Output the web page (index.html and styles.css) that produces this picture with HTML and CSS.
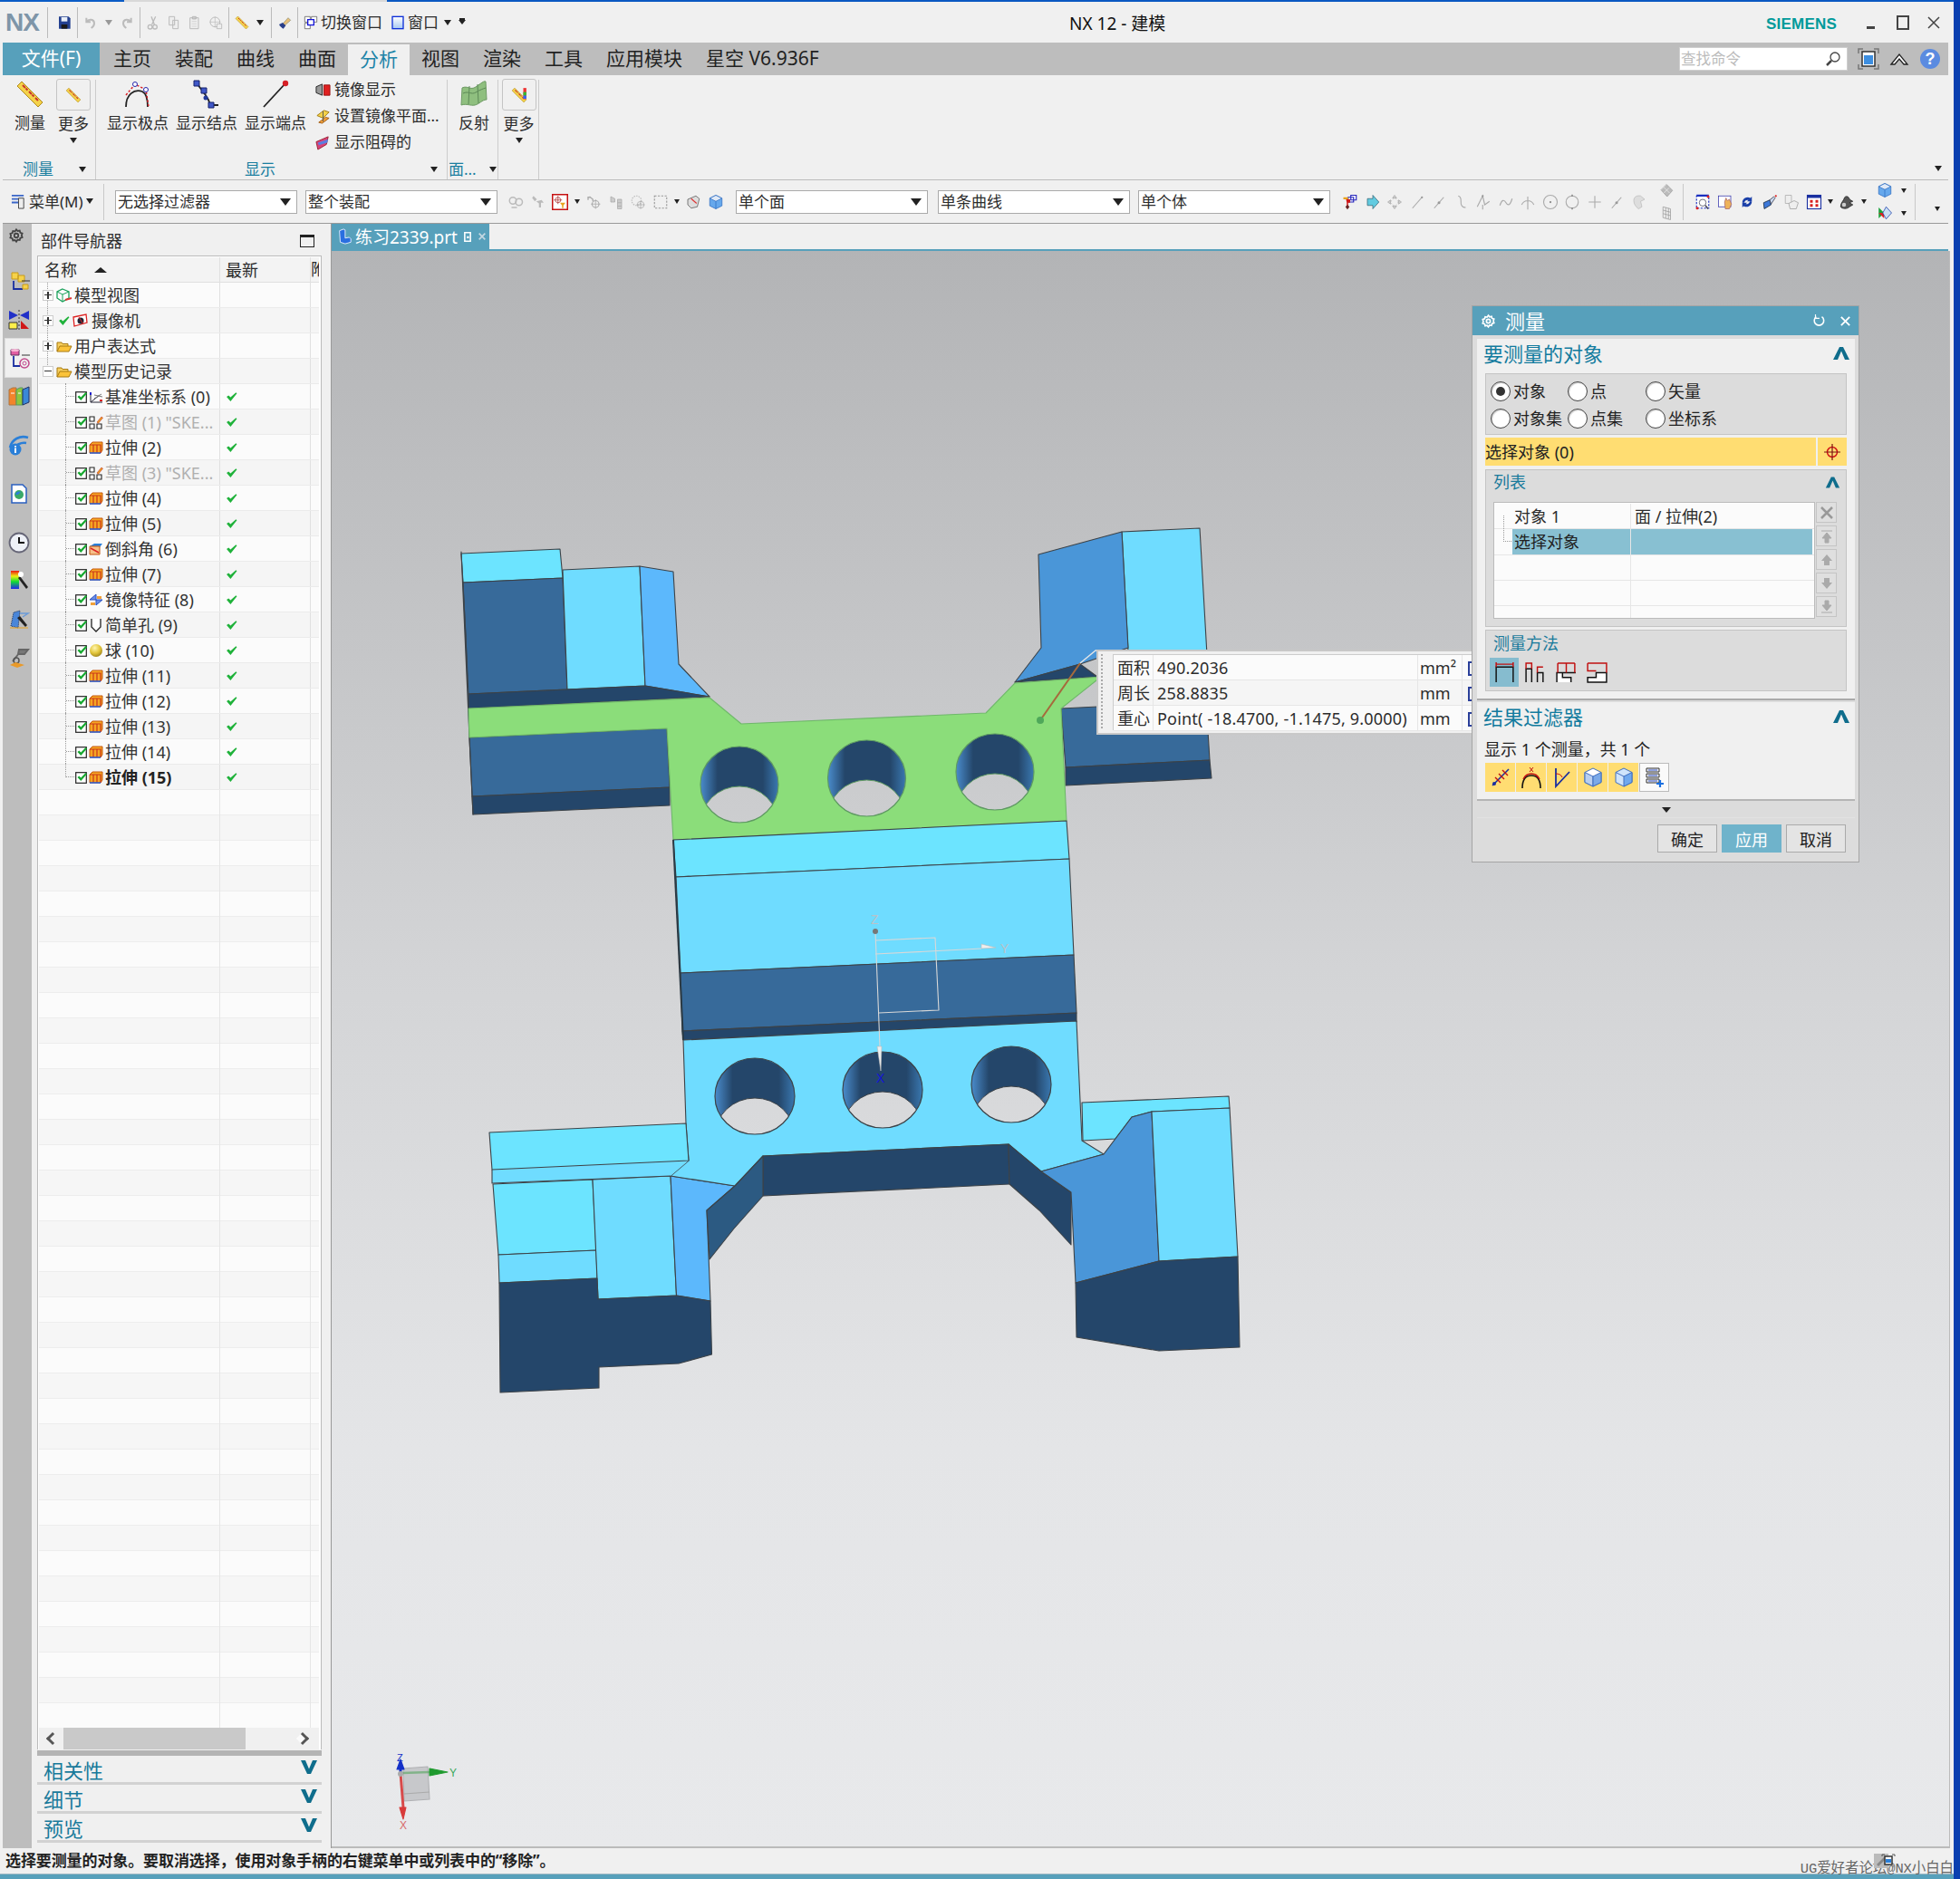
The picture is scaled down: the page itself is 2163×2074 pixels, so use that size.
FILE: index.html
```html
<!DOCTYPE html>
<html lang="zh-CN">
<head>
<meta charset="utf-8">
<title>NX 12 - 建模</title>
<link rel="stylesheet" href="styles.css">
</head>
<body>
<svg class="defs" width="0" height="0" aria-hidden="true">
  <defs>
    <symbol id="s-tick" viewBox="0 0 24 24"><path d="M2 13l4-3 4 4L21 4l2 2L10 22z" fill="#1fb23a"/></symbol>
    <symbol id="s-cb" viewBox="0 0 14 14"><rect x=".7" y="1.7" width="11.6" height="11.6" fill="#fff" stroke="#222" stroke-width="1.2"/><path d="M2.5 7l1.8-1.4 2 2L11.5 2l1.6 1.2L6.3 11z" fill="#16a82f"/></symbol>
    <symbol id="s-ext" viewBox="0 0 16 16"><path d="M1 5l3-3h11v9l-2 3H1z" fill="#f6a623" stroke="#c4560f"/><path d="M1 5h12v9M5 5v9M9 5v9" fill="none" stroke="#c9361a" stroke-width="1.2"/><path d="M1 14h12" stroke="#2a60d8" stroke-width="1.5"/></symbol>
    <symbol id="s-sk" viewBox="0 0 16 16"><path d="M1 2h5v5H1zM1 10h5v5H1zM9 10h5v5H9z" fill="#fff" stroke="#222" stroke-width="1.1"/><path d="M9 8l5-6 1.500 1.200-5 6z" fill="#f2a21d" stroke="#b33"  stroke-width=".6"/></symbol>
    <symbol id="s-folder" viewBox="0 0 18 16"><path d="M1 14V4h5l1 1.500h6V8" fill="#f7cf5e" stroke="#a87a10"/><path d="M1 14l3-6h13l-3 6z" fill="#fbc33a" stroke="#a87a10"/></symbol>
    <symbol id="s-ruler" viewBox="0 0 32 32"><path d="M7 2l23 23-5 5L2 7z" fill="#f4d24a" stroke="#b08a1b"/><path d="M8 6l3 3M11.500 9.500l2 2M15 13l3 3M18.500 16.500l2 2M22 20l3 3" stroke="#c8352a" stroke-width="2"/></symbol>
    <symbol id="s-cube" viewBox="0 0 24 24"><path d="M12 2l9 4.500v11L12 22l-9-4.500v-11z" fill="#66a8ec" stroke="#2f6ec0"/><path d="M3 6.500L12 11l9-4.500L12 2z" fill="#dfe9f7" stroke="#2f6ec0"/><path d="M12 11v11" stroke="#2f6ec0"/></symbol>
    <symbol id="s-g1" viewBox="0 0 24 24"><circle cx="8" cy="10" r="5" fill="none" stroke="#bbb" stroke-width="2"/><circle cx="17" cy="12" r="5" fill="none" stroke="#bbb" stroke-width="2"/><path d="M6 20h8" stroke="#bbb" stroke-width="2"/></symbol>
    <symbol id="s-g2" viewBox="0 0 24 24"><path d="M5 3l5 5-3 3-4-5zM9 11l8-2 3 4h-4v7h-3v-6z" fill="#bbb"/></symbol>
    <symbol id="s-g3" viewBox="0 0 24 24"><path d="M6 4l5 4v3M4 9V5h4" fill="none" stroke="#aaa" stroke-width="1.800"/><circle cx="15" cy="15" r="5" fill="none" stroke="#aaa" stroke-width="1.500"/><path d="M15 8v14M8 15h14" stroke="#aaa"/></symbol>
    <symbol id="s-g4" viewBox="0 0 24 24"><path d="M4 4l6 3v5H4zM14 8h6v14h-6zM14 13h6M14 18h6" fill="#ccc" stroke="#aaa"/></symbol>
    <symbol id="s-g5" viewBox="0 0 24 24"><circle cx="10" cy="10" r="7" fill="none" stroke="#bbb" stroke-width="1.500" stroke-dasharray="2 1.500"/><circle cx="16" cy="16" r="5" fill="none" stroke="#aaa"/><path d="M16 10v12M10 16h12" stroke="#aaa"/></symbol>
    <symbol id="s-line" viewBox="0 0 24 24"><path d="M5 21L19 5" stroke="#aaa" stroke-width="1.500"/><circle cx="19" cy="5" r="1.500" fill="#999"/></symbol>
    <symbol id="s-line2" viewBox="0 0 24 24"><path d="M5 21L19 5" stroke="#aaa" stroke-width="1.500"/><circle cx="12" cy="13" r="2" fill="#999"/></symbol>
    <symbol id="s-arc" viewBox="0 0 24 24"><path d="M7 3c7 2 2 9 5 14 1 2 4 3 6 3" fill="none" stroke="#aaa" stroke-width="1.500"/></symbol>
    <symbol id="s-sp" viewBox="0 0 24 24"><path d="M3 19L11 3l3 13 7-5M11 16v7" fill="none" stroke="#aaa" stroke-width="1.500"/><circle cx="11" cy="3" r="1.500" fill="#999"/></symbol>
    <symbol id="s-wave" viewBox="0 0 24 24"><path d="M3 17c3-9 6-9 9-4s6 4 9-6" fill="none" stroke="#aaa" stroke-width="1.600"/></symbol>
    <symbol id="s-mid" viewBox="0 0 24 24"><path d="M3 16c4-8 14-8 18 0M12 4v19" fill="none" stroke="#aaa" stroke-width="1.500"/></symbol>
    <symbol id="s-cir" viewBox="0 0 24 24"><circle cx="12" cy="12" r="10" fill="none" stroke="#aaa" stroke-width="1.500"/><circle cx="12" cy="12" r="1.500" fill="#888"/></symbol>
    <symbol id="s-cir2" viewBox="0 0 24 24"><circle cx="12" cy="12" r="9" fill="none" stroke="#aaa" stroke-width="1.500"/><path d="M12 1v3M12 20v3" stroke="#888" stroke-width="2"/></symbol>
    <symbol id="s-plus" viewBox="0 0 24 24"><path d="M12 3v18M3 12h18" stroke="#aaa" stroke-width="1.500"/></symbol>
    <symbol id="s-blob" viewBox="0 0 24 24"><path d="M4 10c0-6 5-8 10-7l6 5-6 3 2 8-5 3c-4-3-7-7-7-12z" fill="#ddd" stroke="#bbb"/></symbol>
    <symbol id="s-gridw" viewBox="0 0 24 24"><path d="M4 10l8-8 9 9-8 9z" fill="#bbb" stroke="#999"/><path d="M8 6l9 9M12 2l-8 8M16 7l-8 8" stroke="#eee"/></symbol>
    <symbol id="s-grid" viewBox="0 0 24 24"><path d="M7 3l11 3v16L7 19z" fill="#eee" stroke="#999"/><path d="M7 8l11 3M7 13l11 3M11 4v16M15 5v16" stroke="#999"/></symbol>
    <symbol id="s-wheel" viewBox="0 0 24 24"><path d="M12 3l2 2.300 3-.600.800 3 3 1-1 3 1 3-3 1-.800 3-3-.600L12 21l-2-2.300-3 .600-.800-3-3-1 1-3-1-3 3-1 .800-3 3 .600z" fill="none" stroke="currentColor" stroke-width="2.400"/><circle cx="12" cy="12" r="3" fill="none" stroke="currentColor" stroke-width="2.400"/></symbol>
    <symbol id="s-up" viewBox="0 0 20 20"><path d="M1 17h5l4-9.500 4 9.500h5L12 3H8z" fill="#0f6d8c"/></symbol>
    <symbol id="s-down" viewBox="0 0 20 20"><path d="M1 3h5l4 9.500L14 3h5l-7 15H8z" fill="#0f6d8c"/></symbol>
  </defs>
</svg>

<div class="window">
  <div class="edge"><span class="edge-a"></span><span class="edge-b"></span><span class="edge-c"></span></div>
  <div class="inner">
    <header class="titlebar">
      <div class="qa">
        <span class="nx">NX</span>
        <i class="qsep"></i>
        <svg class="qi save" viewBox="0 0 24 24"><path d="M3 2h16l3 3v17H3z" fill="#23408f"/><path d="M7 3h10v7H7z" fill="#e8eef8"/><path d="M7 15h10v7H7z" fill="#1a1a1a"/></svg>
        <i class="qsep"></i>
        <svg class="qi" viewBox="0 0 24 24"><path d="M5 4v7h7M5 11c4-6 13-5 13 2 0 3-2 6-5 8" fill="none" stroke="#bbb" stroke-width="3"/></svg><i class="caret lt"></i>
        <svg class="qi" viewBox="0 0 24 24"><path d="M19 4v7h-7M19 11c-4-6-13-5-13 2 0 3 2 6 5 8" fill="none" stroke="#bbb" stroke-width="3"/></svg>
        <i class="qsep"></i>
        <svg class="qi" viewBox="0 0 24 24"><path d="M16 2l-6 13M9 2l5 13" stroke="#bbb" stroke-width="2"/><circle cx="7" cy="19" r="3.500" fill="none" stroke="#bbb" stroke-width="2"/><circle cx="15" cy="19" r="3.500" fill="none" stroke="#bbb" stroke-width="2"/></svg>
        <svg class="qi" viewBox="0 0 24 24"><path d="M4 2h9v14H4zM10 8h9v14h-9z" fill="#eee" stroke="#bbb" stroke-width="1.500"/></svg>
        <svg class="qi" viewBox="0 0 24 24"><path d="M4 4h14v18H4z" fill="#eee" stroke="#bbb" stroke-width="1.500"/><path d="M8 2h6v4H8z" fill="#ccc" stroke="#aaa"/><path d="M7 10h8M7 14h8M7 18h8" stroke="#ccc"/></svg>
        <svg class="qi" viewBox="0 0 24 24"><circle cx="11" cy="11" r="8" fill="none" stroke="#bbb" stroke-width="1.500"/><path d="M11 2v18M2 11h18" stroke="#bbb"/><path d="M14 14h8v8h-8z" fill="#eee" stroke="#aaa"/></svg>
        <i class="qsep"></i>
        <svg class="qi" viewBox="0 0 32 32"><use href="#s-ruler"/></svg><i class="caret"></i>
        <i class="qsep"></i>
        <svg class="qi" viewBox="0 0 24 24"><path d="M9 14l9-10 4 4-10 9z" fill="#e9c07a" stroke="#886"/><path d="M3 15l6-3 5 5-4 5c-2-1-6-4-7-7z" fill="#2a3f8a"/></svg>
        <i class="qsep"></i>
        <svg class="qi" viewBox="0 0 24 24"><path d="M2 2h9v9H2zM13 2h9v9h-9zM2 13h9v9H2z" fill="#fff" stroke="#444"/><path d="M7 7h10v9H7z" fill="#fff" stroke="#1515d8" stroke-width="2"/></svg>
        <span class="qtext">切换窗口</span>
        <svg class="qi win" viewBox="0 0 24 24"><defs><linearGradient id="wg" x1="0" y1="0" x2="0" y2="1"><stop offset="0" stop-color="#fff"/><stop offset="1" stop-color="#a7c8f2"/></linearGradient></defs><rect x="3" y="2" width="18" height="20" fill="url(#wg)" stroke="#0d2fd8" stroke-width="2"/></svg>
        <span class="qtext">窗口</span><i class="caret c-win"></i>
        <i class="caret over"></i>
      </div>
      <div class="apptitle">NX 12 - 建模</div>
      <div class="winctl">
        <span class="siemens">SIEMENS</span>
        <i class="min"></i><i class="max"></i>
        <svg class="cls" viewBox="0 0 14 14"><path d="M1 1l12 12M13 1L1 13" stroke="#444" stroke-width="1.500"/></svg>
      </div>
    </header>

    <nav class="menubar">
      <span class="filetab">文件(F)</span>
      <span class="mi">主页</span><span class="mi">装配</span><span class="mi">曲线</span><span class="mi">曲面</span>
      <span class="mi on">分析</span>
      <span class="mi">视图</span><span class="mi">渲染</span><span class="mi">工具</span><span class="mi">应用模块</span>
      <span class="mi">星空 V6.936F</span>
      <div class="menu-right">
        <div class="search"><span>查找命令</span><svg viewBox="0 0 18 18"><circle cx="11" cy="7" r="5" fill="none" stroke="#444" stroke-width="1.300"/><path d="M7 11l-5 5" stroke="#444" stroke-width="2.500"/></svg></div>
        <svg class="mr-ic" viewBox="0 0 24 24"><path d="M1 6V1h5M18 1h5v5M23 18v5h-5M6 23H1v-5" fill="none" stroke="#777" stroke-width="1.500"/><rect x="5" y="4" width="14" height="16" fill="#fff" stroke="#333" stroke-width="1.500"/><rect x="7" y="8" width="10" height="10" fill="#3d8ee0"/></svg>
        <svg class="mr-ic" viewBox="0 0 24 24"><path d="M3 18L12 7l9 11-4 0-5-6-5 6z" fill="#fff" stroke="#222" stroke-width="1.300"/></svg>
        <svg class="mr-ic" viewBox="0 0 24 24"><circle cx="12" cy="12" r="11" fill="#5b8be0"/><text x="12" y="18" class="help">?</text></svg>
      </div>
    </nav>

    <section class="ribbon">
      <div class="rg g1">
        <div class="rg-body">
          <div class="rb w-a"><svg class="big" viewBox="0 0 32 32"><use href="#s-ruler"/></svg><span>测量</span></div>
          <div class="rb w-b"><span class="ibox"><svg viewBox="0 0 32 32"><use href="#s-ruler"/></svg></span><span>更多</span><i class="caret"></i></div>
        </div>
        <div class="rg-foot"><span class="lbl">测量</span><i class="caret"></i></div>
      </div>
      <div class="rg g2">
        <div class="rg-body">
          <div class="rb w-c"><svg class="big" viewBox="0 0 32 32"><path d="M3 30C3 16 12 10 21 13c4 2 6 9 6 17" fill="none" stroke="#222" stroke-width="1.800"/><path d="M3 17L13 5l12 6 3 19" fill="none" stroke="#d61f26" stroke-width="1.500" stroke-dasharray="2.500 2"/><circle cx="13" cy="5" r="2.500" fill="#fff" stroke="#22a"/><circle cx="25" cy="11" r="2.500" fill="#fff" stroke="#22a"/></svg><span>显示极点</span></div>
          <div class="rb w-c"><svg class="big" viewBox="0 0 32 32"><path d="M5 2c3 8 4 6 7 11s6 6 8 15h9" fill="none" stroke="#222" stroke-width="1.800"/><path d="M2 1h6v6H2zM10 9h6v6h-6zM18 25h6v6h-6z" fill="#4058c8" stroke="#14206a"/><circle cx="15" cy="20" r="2.500" fill="#223a9a"/></svg><span>显示结点</span></div>
          <div class="rb w-c"><svg class="big" viewBox="0 0 32 32"><path d="M3 30L27 4" stroke="#222" stroke-width="1.800"/><circle cx="27" cy="4" r="3.200" fill="#d61f26"/></svg><span>显示端点</span></div>
          <div class="rlist">
            <div><svg viewBox="0 0 18 18"><path d="M1 5l7-3v13l-7-3z" fill="#999" stroke="#222"/><path d="M10 3h7v12h-7z" fill="#e02020" stroke="#911"/></svg><span>镜像显示</span></div>
            <div><svg viewBox="0 0 18 18"><path d="M2 8l8-6 6 2-7 7z" fill="#f4d24a" stroke="#a27a10"/><path d="M4 16l8-6 4 1-8 6z" fill="#f2a13a" stroke="#a25a10"/><path d="M9 3v12" stroke="#555"/></svg><span>设置镜像平面...</span></div>
            <div><svg viewBox="0 0 18 18"><path d="M1 8l14-6-2 9-10 6z" fill="#d9437a" stroke="#923"/><path d="M3 9l12-4-1 4-10 3z" fill="#5a7ee0"/></svg><span>显示阻碍的</span></div>
          </div>
        </div>
        <div class="rg-foot center"><span class="lbl">显示</span><i class="caret abs-r"></i></div>
      </div>
      <div class="rg g3">
        <div class="rg-body">
          <div class="rb w-d"><svg class="big" viewBox="0 0 32 32"><path d="M3 9c6-3 9 3 15-1s9-7 11-6l1 20c-5 0-8 5-13 6S8 26 2 28z" fill="#8fbf7f" stroke="#6d9a63"/><path d="M11 7l-1 20M20 5l1 21M4 15c6-3 9 2 14-1s8-4 11-5" stroke="#5d8a57" fill="none"/></svg><span>反射</span></div>
        </div>
        <div class="rg-foot"><span class="lbl">面...</span><i class="caret"></i></div>
      </div>
      <div class="rg g4">
        <div class="rg-body">
          <div class="rb w-e"><span class="ibox"><svg viewBox="0 0 32 32"><use href="#s-ruler"/><path d="M24 2h6v22h-6z" fill="#e33"/><path d="M24 10h6v7h-6z" fill="#3b3"/><path d="M24 17h6v6h-6z" fill="#36f"/></svg></span><span>更多</span><i class="caret"></i></div>
        </div>
      </div>
      <div class="rg-end"><i class="caret"></i></div>
    </section>

    <section class="selbar">
      <div class="menu-btn"><svg viewBox="0 0 18 18"><path d="M1 2h14M1 6h14M1 10h14" stroke="#3a66c8" stroke-width="2"/><path d="M9 5h6v12H9z" fill="#eee" stroke="#444"/></svg><span>菜单(M)</span><i class="caret"></i></div>
      <i class="vsep"></i>
      <div class="combo c201"><span>无选择过滤器</span><i class="caret big-c"></i></div>
      <div class="combo c212"><span>整个装配</span><i class="caret big-c"></i></div>
      <div class="tools t-a">
        <svg><use href="#s-g1"/></svg><svg><use href="#s-g2"/></svg>
        <svg class="redbox" viewBox="0 0 24 24"><rect x="1" y="1" width="22" height="22" fill="#fff" stroke="#c51111" stroke-width="2"/><circle cx="9" cy="9" r="4" fill="none" stroke="#a33"/><path d="M9 3v12M3 9h12" stroke="#a33"/><path d="M12 13h8l-3 4v4h-2v-4z" fill="#e9a21d"/></svg><i class="caret"></i>
        <svg><use href="#s-g3"/></svg><svg><use href="#s-g4"/></svg><svg><use href="#s-g5"/></svg>
        <svg viewBox="0 0 24 24"><rect x="3" y="3" width="18" height="18" fill="none" stroke="#999" stroke-dasharray="3 2" stroke-width="1.500"/></svg><i class="caret"></i>
        <svg viewBox="0 0 24 24"><path d="M4 8l12-5 5 4-3 12-9 2-5-5z" fill="#ddd" stroke="#555"/><path d="M9 7l8 7" stroke="#d33" stroke-width="1.500"/></svg>
        <svg><use href="#s-cube"/></svg>
      </div>
      <div class="combo c212 first"><span>单个面</span><i class="caret big-c"></i></div>
      <div class="combo c212 g11"><span>单条曲线</span><i class="caret big-c"></i></div>
      <div class="combo c212 g9"><span>单个体</span><i class="caret big-c"></i></div>
      <div class="tools t-b">
        <svg viewBox="0 0 24 24"><path d="M9 5h8v7H9zM13 2h8v7h-8z" fill="#fff" stroke="#22b" stroke-width="1.500"/><path d="M2 5h7v3H2z" fill="#e9a21d"/><path d="M6 8h6v5H9v8H7v-8z" fill="#d01818"/><path d="M8 16l3 3-3 4-3-4z" fill="#622"/></svg>
        <svg viewBox="0 0 24 24"><path d="M4 7h8V2l9 10-9 10v-5H4z" fill="#62cbe0" stroke="#367"/></svg>
        <svg viewBox="0 0 24 24"><path d="M12 2l3 4H9zM12 22l3-4H9zM2 12l4-3v6zM22 12l-4-3v6z" fill="#ccc" stroke="#aaa"/><circle cx="12" cy="12" r="5" fill="none" stroke="#bbb" stroke-dasharray="2 2"/></svg>
        <svg><use href="#s-line"/></svg><svg><use href="#s-line2"/></svg><svg><use href="#s-arc"/></svg><svg><use href="#s-sp"/></svg><svg><use href="#s-wave"/></svg><svg><use href="#s-mid"/></svg><svg><use href="#s-cir"/></svg><svg><use href="#s-cir2"/></svg><svg><use href="#s-plus"/></svg><svg><use href="#s-line2"/></svg><svg><use href="#s-blob"/></svg>
        <span class="stack"><svg><use href="#s-gridw"/></svg><svg><use href="#s-grid"/></svg></span>
        <i class="vsep tall"></i>
        <svg viewBox="0 0 24 24"><rect x="3" y="3" width="18" height="18" fill="#fff" stroke="#1a2fc0" stroke-width="1.500" stroke-dasharray="3 2"/><circle cx="12" cy="13" r="5" fill="none" stroke="#445"/><path d="M16 17l4 5" stroke="#445" stroke-width="2"/><path d="M3 1h18v3H3z" fill="#1a2fc0"/><circle cx="4" cy="21" r="2" fill="#d22"/><circle cx="20" cy="4" r="2" fill="#d22"/></svg>
        <svg viewBox="0 0 24 24"><rect x="2" y="3" width="18" height="16" fill="#fff" stroke="#33a"/><path d="M11 12l2-6 2 4 3-2 3 7-3 7h-6z" fill="#eeb35a" stroke="#a66"/></svg>
        <svg viewBox="0 0 24 24"><path d="M5 13a8 8 0 0 1 12-7l2-2v7h-7l2-2a5 5 0 0 0-6 4z" fill="#1a3fa8"/><path d="M19 11a8 8 0 0 1-12 7l-2 2v-7h7l-2 2a5 5 0 0 0 6-4z" fill="#1a3fa8"/></svg>
        <svg viewBox="0 0 24 24"><path d="M3 13l9-4 2 7-10 6z" fill="#3d78d8" stroke="#123"/><path d="M12 9l6-5 2 2-6 9z" fill="#c8d8f0" stroke="#334"/><circle cx="21" cy="3" r="1.500" fill="#d22"/></svg>
        <svg viewBox="0 0 24 24"><path d="M3 2h9v12H3z" fill="#eee" stroke="#aaa"/><path d="M8 14l8-4 6 3-3 9H10z" fill="#eee" stroke="#999"/></svg>
        <svg viewBox="0 0 24 24"><rect x="2" y="2" width="20" height="20" fill="#fff" stroke="#1a2fa0" stroke-width="1.500"/><path d="M2 2h20v4H2z" fill="#1a2fa0"/><path d="M6 9h4v4H6zM14 9h4v4h-4zM6 15h4v4H6zM14 15h4v4h-4z" fill="#d82020"/></svg><i class="caret"></i>
        <svg viewBox="0 0 24 24"><path d="M3 19c0-6 4-8 6-14 3-3 7 0 7 3l5 3-5 2 5 3-5 3c-4 4-11 3-13 0z" fill="#555" stroke="#222"/><circle cx="8" cy="16" r="3" fill="#ccc"/></svg><i class="caret"></i>
        <span class="stack sb"><span class="stk"><svg><use href="#s-cube"/></svg><i class="caret"></i></span><span class="stk"><svg viewBox="0 0 24 24"><path d="M3 4l8 8-8 8z" fill="#18a13a"/><path d="M3 12h8v8z" fill="#d22"/><path d="M14 3l8 9-8 9-5-9z" fill="#c9def5" stroke="#1a3fa8"/></svg><i class="caret"></i></span></span>
        <i class="vsep tall"></i>
        <i class="caret end"></i>
      </div>
    </section>

    <div class="main">
      <aside class="strip">
        <svg class="st-gear"><use href="#s-wheel"/></svg>
        <div class="st st1"><svg viewBox="0 0 24 24"><path d="M4 3h7v7H4zM11 6h7v7h-7z" fill="#f6d24a" stroke="#c79a1a"/><path d="M6 12v9h10" fill="none" stroke="#1a2fa0" stroke-width="1.800"/><path d="M16 16h6v5h-6z" fill="#f6d24a" stroke="#c79a1a"/><path d="M15 12h9" stroke="#333"/></svg></div>
        <div class="st m1"><svg viewBox="0 0 24 24"><path d="M1 2l10 5-10 5zM23 2l-10 5 10 5z" fill="#2030c8"/><path d="M1 15h9v7H1z" fill="#fff04a" stroke="#333"/><path d="M14 13l9 9h-9z" fill="#d01818"/><path d="M12 1v23" stroke="#333" stroke-dasharray="2 2"/></svg></div>
        <div class="st active"><svg viewBox="0 0 24 24"><path d="M2 3h9v6H2z" fill="#e35ea2" stroke="#5a2a5a"/><ellipse cx="6.500" cy="3.500" rx="4.500" ry="1.500" fill="#f6b5d4"/><path d="M5 10v11h7" fill="none" stroke="#1a2fa0" stroke-width="1.800"/><circle cx="17" cy="18" r="5" fill="none" stroke="#c24a8c" stroke-width="1.500"/><circle cx="17" cy="18" r="2" fill="none" stroke="#c24a8c"/><path d="M14 9h9" stroke="#333"/></svg></div>
        <div class="st"><svg viewBox="0 0 24 24"><path d="M1 5l4-2h4v19H1z" fill="#f3842b" stroke="#a74"/><path d="M9 5l4-2h3v19H9z" fill="#8fc63d" stroke="#596"/><path d="M16 5l7-3v17l-7 3z" fill="#3a88d8" stroke="#236"/><path d="M3 9h4M11 9h3" stroke="#fff"/></svg></div>
        <div class="st m11"><svg viewBox="0 0 24 24"><path d="M2 15C4 6 13 1 22 4M7 17c1-5 7-8 13-7" fill="none" stroke="#2a7fd8" stroke-width="2.600"/><circle cx="8" cy="17" r="6.500" fill="#2a7fd8"/><path d="M7 13h2v1.500H7zM7 15.500h2V21H7z" fill="#fff"/></svg></div>
        <div class="st m12"><svg viewBox="0 0 24 24"><path d="M4 2h12l4 4v16H4z" fill="#fff" stroke="#2a5fc0" stroke-width="1.500"/><circle cx="12" cy="13" r="5" fill="#3aa968"/><path d="M8 13a4 4 0 0 1 6-3l-3 3z" fill="#2a7fd8"/></svg></div>
        <div class="st m12"><svg viewBox="0 0 24 24"><circle cx="12" cy="12" r="10.500" fill="#eef1f7" stroke="#667" stroke-width="1.800"/><path d="M12 6v6h6" fill="none" stroke="#111" stroke-width="2"/></svg></div>
        <div class="st m-1"><svg viewBox="0 0 24 24"><defs><linearGradient id="rb" x1="0" y1="0" x2="0" y2="1"><stop offset="0" stop-color="#e11"/><stop offset=".3" stop-color="#ee1"/><stop offset=".6" stop-color="#1d3"/><stop offset="1" stop-color="#22e"/></linearGradient></defs><rect x="3" y="2" width="9" height="20" fill="url(#rb)"/><path d="M13 8l9 12-2 2-9-12z" fill="#222"/><circle cx="14" cy="6" r="3" fill="#fff"/></svg></div>
        <div class="st m1"><svg viewBox="0 0 24 24"><path d="M3 20l3-15 7-2-2 19z" fill="#4a86d8" stroke="#235" stroke-dasharray="1 1"/><path d="M13 6h9l-6 4" fill="none" stroke="#6a9ad8" stroke-width="1.500"/><path d="M13 9l8 10-2 2-9-10z" fill="#222"/><path d="M2 22l20 0" stroke="#e9a21d"/></svg></div>
        <div class="st m1"><svg viewBox="0 0 24 24"><path d="M12 3h10l-4 5H11zM12 7l-7 9" stroke="#666" fill="#777" stroke-width="2"/><circle cx="9" cy="15" r="3" fill="none" stroke="#555" stroke-width="1.500"/><path d="M2 20l6-3 10 3-8 3z" fill="#e99a2a"/></svg></div>
      </aside>

      <aside class="nav">
        <div class="nav-head"><span>部件导航器</span><i class="nav-max"></i></div>
        <div class="tbl">
          <div class="thead"><span class="c-a"><span>名称</span><i class="sort"></i></span><span class="c-b"><span>最新</span></span><span class="c-c">附</span></div>
          <div class="tree">
            <div class="r top"><span class="c-a"><i class="exp plus"></i><svg class="ti" viewBox="0 0 18 16"><path d="M7 1l7 3v7l-7 4-6-4V4z" fill="none" stroke="#1ba15b" stroke-width="1.300"/><path d="M1 4l6 3 7-3M7 7v8" fill="none" stroke="#1ba15b"/><path d="M10 13l7-2" stroke="#d33" stroke-width="2"/></svg><span>模型视图</span></span><span class="c-b"></span><span class="c-c"></span></div>
            <div class="r top"><span class="c-a"><i class="exp plus"></i><svg class="ti tk"><use href="#s-tick"/></svg><svg class="ti" viewBox="0 0 18 16"><path d="M1 4l14-3 1 9-14 4z" fill="#fff" stroke="#d22" stroke-width="1.300"/><circle cx="9" cy="8" r="3.500" fill="#223"/><path d="M7 4l5 8" stroke="#d22"/></svg><span class="sp">摄像机</span></span><span class="c-b"></span><span class="c-c"></span></div>
            <div class="r top"><span class="c-a"><i class="exp plus"></i><svg class="ti"><use href="#s-folder"/></svg><span>用户表达式</span></span><span class="c-b"></span><span class="c-c"></span></div>
            <div class="r top last"><span class="c-a"><i class="exp minus"></i><svg class="ti"><use href="#s-folder"/></svg><span>模型历史记录</span></span><span class="c-b"></span><span class="c-c"></span></div>
            <div class="r ft"><span class="c-a"><svg class="cb"><use href="#s-cb"/></svg><svg class="fi" viewBox="0 0 16 16"><path d="M2 3v11M2 14h13M2 14l10-8" stroke="#223" fill="none"/><path d="M2 3v3" stroke="#22c" stroke-width="2"/><path d="M12 12h3" stroke="#d22" stroke-width="2"/><path d="M6 6l9 2M6 10l8-5" stroke="#777"/></svg><span>基准坐标系 (0)</span></span><span class="c-b"><svg class="ok"><use href="#s-tick"/></svg></span><span class="c-c"></span></div>
            <div class="r ft dim"><span class="c-a"><svg class="cb"><use href="#s-cb"/></svg><svg class="fi"><use href="#s-sk"/></svg><span>草图 (1) "SKE...</span></span><span class="c-b"><svg class="ok"><use href="#s-tick"/></svg></span><span class="c-c"></span></div>
            <div class="r ft"><span class="c-a"><svg class="cb"><use href="#s-cb"/></svg><svg class="fi"><use href="#s-ext"/></svg><span>拉伸 (2)</span></span><span class="c-b"><svg class="ok"><use href="#s-tick"/></svg></span><span class="c-c"></span></div>
            <div class="r ft dim"><span class="c-a"><svg class="cb"><use href="#s-cb"/></svg><svg class="fi"><use href="#s-sk"/></svg><span>草图 (3) "SKE...</span></span><span class="c-b"><svg class="ok"><use href="#s-tick"/></svg></span><span class="c-c"></span></div>
            <div class="r ft"><span class="c-a"><svg class="cb"><use href="#s-cb"/></svg><svg class="fi"><use href="#s-ext"/></svg><span>拉伸 (4)</span></span><span class="c-b"><svg class="ok"><use href="#s-tick"/></svg></span><span class="c-c"></span></div>
            <div class="r ft"><span class="c-a"><svg class="cb"><use href="#s-cb"/></svg><svg class="fi"><use href="#s-ext"/></svg><span>拉伸 (5)</span></span><span class="c-b"><svg class="ok"><use href="#s-tick"/></svg></span><span class="c-c"></span></div>
            <div class="r ft"><span class="c-a"><svg class="cb"><use href="#s-cb"/></svg><svg class="fi" viewBox="0 0 16 16"><path d="M1 5l5-3h9l-3 4z" fill="#2a7fd8"/><path d="M1 5h11v9H1z" fill="#f6c08a" stroke="#c4560f"/><path d="M2 7l9 5" stroke="#d22" stroke-width="1.500"/></svg><span>倒斜角 (6)</span></span><span class="c-b"><svg class="ok"><use href="#s-tick"/></svg></span><span class="c-c"></span></div>
            <div class="r ft"><span class="c-a"><svg class="cb"><use href="#s-cb"/></svg><svg class="fi"><use href="#s-ext"/></svg><span>拉伸 (7)</span></span><span class="c-b"><svg class="ok"><use href="#s-tick"/></svg></span><span class="c-c"></span></div>
            <div class="r ft"><span class="c-a"><svg class="cb"><use href="#s-cb"/></svg><svg class="fi" viewBox="0 0 16 16"><path d="M1 8l7-6v6zM15 8l-7 6V8z" fill="#6a8ee8" stroke="#2a50c0"/><path d="M2 11h5v3H2zM9 4h5v3H9z" fill="#f2a13a"/></svg><span>镜像特征 (8)</span></span><span class="c-b"><svg class="ok"><use href="#s-tick"/></svg></span><span class="c-c"></span></div>
            <div class="r ft"><span class="c-a"><svg class="cb"><use href="#s-cb"/></svg><svg class="fi" viewBox="0 0 16 16"><path d="M3 1v9l5 5 5-5V1" fill="#fff" stroke="#222" stroke-width="1.300"/></svg><span>简单孔 (9)</span></span><span class="c-b"><svg class="ok"><use href="#s-tick"/></svg></span><span class="c-c"></span></div>
            <div class="r ft"><span class="c-a"><svg class="cb"><use href="#s-cb"/></svg><svg class="fi" viewBox="0 0 16 16"><defs><radialGradient id="ball" cx=".4" cy=".3" r=".7"><stop offset="0" stop-color="#fff6b0"/><stop offset=".6" stop-color="#e2c53a"/><stop offset="1" stop-color="#a58a20"/></radialGradient></defs><circle cx="8" cy="8" r="7" fill="url(#ball)"/></svg><span>球 (10)</span></span><span class="c-b"><svg class="ok"><use href="#s-tick"/></svg></span><span class="c-c"></span></div>
            <div class="r ft"><span class="c-a"><svg class="cb"><use href="#s-cb"/></svg><svg class="fi"><use href="#s-ext"/></svg><span>拉伸 (11)</span></span><span class="c-b"><svg class="ok"><use href="#s-tick"/></svg></span><span class="c-c"></span></div>
            <div class="r ft"><span class="c-a"><svg class="cb"><use href="#s-cb"/></svg><svg class="fi"><use href="#s-ext"/></svg><span>拉伸 (12)</span></span><span class="c-b"><svg class="ok"><use href="#s-tick"/></svg></span><span class="c-c"></span></div>
            <div class="r ft"><span class="c-a"><svg class="cb"><use href="#s-cb"/></svg><svg class="fi"><use href="#s-ext"/></svg><span>拉伸 (13)</span></span><span class="c-b"><svg class="ok"><use href="#s-tick"/></svg></span><span class="c-c"></span></div>
            <div class="r ft"><span class="c-a"><svg class="cb"><use href="#s-cb"/></svg><svg class="fi"><use href="#s-ext"/></svg><span>拉伸 (14)</span></span><span class="c-b"><svg class="ok"><use href="#s-tick"/></svg></span><span class="c-c"></span></div>
            <div class="r ft cur"><span class="c-a"><svg class="cb"><use href="#s-cb"/></svg><svg class="fi"><use href="#s-ext"/></svg><span>拉伸 (15)</span></span><span class="c-b"><svg class="ok"><use href="#s-tick"/></svg></span><span class="c-c"></span></div>
            <div class="empty"></div>
          </div>
          <div class="hscroll"><i class="chev l"></i><i class="thumb"></i><i class="chev r"></i></div>
        </div>
        <div class="nav-div"></div>
        <div class="acc"><span>相关性</span><svg><use href="#s-down"/></svg></div>
        <div class="acc"><span>细节</span><svg><use href="#s-down"/></svg></div>
        <div class="acc"><span>预览</span><svg><use href="#s-down"/></svg></div>
      </aside>

      <div class="work">
        <div class="tabstrip">
          <div class="doctab"><svg viewBox="0 0 20 20"><path d="M4 3l5-2 2 1v10l5-1 2 2v4l-7 2-6-2z" fill="#2a6fe0" stroke="#eaf2ff"/></svg><span>练习2339.prt</span><svg class="doc" viewBox="0 0 12 14"><path d="M2 1h8v12H2z" fill="none" stroke="#fff" stroke-width="2"/><path d="M5 6h3v3H5z" fill="#fff"/></svg><svg class="x" viewBox="0 0 12 12"><path d="M2 2l8 8M10 2l-8 8" stroke="#c4d8e2" stroke-width="2"/></svg></div>
        </div>
        <div class="viewport">
          <svg class="model" viewBox="366 278 1786 1761">
            <defs>
              <linearGradient id="bg" gradientUnits="userSpaceOnUse" x1="0" y1="278" x2="0" y2="2039">
                <stop offset="0" stop-color="#b3b4b6"/><stop offset=".45" stop-color="#d3d4d6"/><stop offset=".75" stop-color="#e4e5e7"/><stop offset="1" stop-color="#e8e9eb"/>
              </linearGradient>
              <linearGradient id="hg" x1="0" y1="0" x2="1" y2="0">
                <stop offset="0" stop-color="#4a8ccc"/><stop offset=".22" stop-color="#24466a"/><stop offset=".8" stop-color="#24466a"/><stop offset="1" stop-color="#3a78b0"/>
              </linearGradient>
              <clipPath id="h1"><ellipse cx="816" cy="867" rx="43" ry="42"/></clipPath>
              <clipPath id="h2"><ellipse cx="956.500" cy="860" rx="43" ry="42"/></clipPath>
              <clipPath id="h3"><ellipse cx="1098" cy="853" rx="43" ry="42"/></clipPath>
              <clipPath id="h4"><ellipse cx="833" cy="1211" rx="44" ry="42"/></clipPath>
              <clipPath id="h5"><ellipse cx="974" cy="1204" rx="44" ry="42"/></clipPath>
              <clipPath id="h6"><ellipse cx="1116" cy="1198" rx="44" ry="42"/></clipPath>
            </defs>
            <!-- upper left lug -->
            <path class="pl" d="M511 644l-2-32 109-5 3 32z"/>
            <path class="dk" d="M511 644l110-5 5 123-109 5z"/>
            <path class="lt1" d="M621 630l85-4 6 132-86 4z"/>
            <path class="md2" d="M706 626l37 6 6 102 34 36-71-12z"/>
            <path class="nv" d="M517 767l195-9 71 12-266 13z"/>
            <path class="dk" d="M518 815l218-10 3 65-218 10z"/>
            <path class="nv" d="M521 880l218-10v20l-217 10z"/>
            <path class="eb" d="M509 612l5 90 4 113 4 85-4-85-9-205z"/>
            <!-- upper right lug -->
            <path class="dk" d="M1171 783l160-8 4 65-159 8z"/>
            <path class="nv" d="M1176 848l159-8 2 20-161 8z"/>
            <path class="lt1" d="M1238 588l86-4 8 140-87-4z"/>
            <path class="md1" d="M1146 613l92-25 7 128-53 18-72 20 29-38z"/>
            <path class="nv" d="M1120 754l72-20 19 14z"/>
            <!-- green face -->
            <path class="gr" d="M517 783l266-12 35 29 270-12 32-33 95-7-44 35 6 124-434 21-7-123-218 10z"/>
            <!-- central column -->
            <path class="pl" d="M743 928l434-21 3 42-434 20z"/>
            <path class="lt1" d="M746 969l434-20 5 106-434 20z"/>
            <path class="dk" d="M751 1075l434-20 3 64-435 20z"/>
            <path class="nv" d="M753 1139l435-20v10l-434 20z"/>
            <path class="edge-dk" d="M743 928l11 221"/>
            <!-- lower left lug -->
            <path class="pl" d="M544 1308l110-5 4 78-108 5z"/>
            <path class="lt2" d="M550 1386l108-5 1 31-108 5z"/>
            <path class="lt1" d="M654 1303l86-4 6.500 132-86.500 4z"/>
            <path class="md2" d="M740 1299l71 11-31 27 4 100-37.500-6z"/>
            <path class="nv" d="M551 1417l108-5 1 23 86.500-4 37.500 6 1.500 59-36.500 10-88 4v23l-109 5z"/>
            <!-- lower plate -->
            <path class="lt1" d="M754 1149L1188 1128L1194 1260L1218 1275L1149 1294L1113 1264L842 1277L811 1310L740 1299L760 1282L757 1241Z"/>
            <path class="band" d="M543 1292L760 1282L740 1299L543 1307Z"/>
            <path class="ln" d="M543 1292L543 1307L740 1299"/>
            <path class="pl" d="M540 1251l217-10 3 41-217 10z"/>
            <path class="pl" d="M1194 1218l162-7 1 13-86 4-22 6-18 24-36 2z"/>
            <path class="nv" d="M842 1277l271-13 1 44-272 13z"/>
            <path class="nv2" d="M842 1277v44l-32 36-27 34-3-54 31-27z"/>
            <path class="nv" d="M1113 1264l36 30 33 23v58l-35-38-33-29z"/>
            <!-- lower right lug -->
            <path class="md1" d="M1149 1294l69-19 31-41 22-6 8 165-92 24-5-100z"/>
            <path class="lt1" d="M1271 1228l86-4 9 164-87 5z"/>
            <path class="nv" d="M1187 1417l92-24 87-5 2 100-89 4-91-15z"/>
            <!-- holes -->
            <g class="hole up"><ellipse class="hd" cx="816" cy="867" rx="43" ry="42"/><ellipse class="hs" cx="816" cy="911" rx="43" ry="42" clip-path="url(#h1)"/><ellipse class="ho" cx="816" cy="867" rx="43" ry="42"/></g>
            <g class="hole up"><ellipse class="hd" cx="956.500" cy="860" rx="43" ry="42"/><ellipse class="hs" cx="956.500" cy="904" rx="43" ry="42" clip-path="url(#h2)"/><ellipse class="ho" cx="956.500" cy="860" rx="43" ry="42"/></g>
            <g class="hole up"><ellipse class="hd" cx="1098" cy="853" rx="43" ry="42"/><ellipse class="hs" cx="1098" cy="897" rx="43" ry="42" clip-path="url(#h3)"/><ellipse class="ho" cx="1098" cy="853" rx="43" ry="42"/></g>
            <g class="hole"><ellipse class="hd" cx="833" cy="1211" rx="44" ry="42"/><ellipse class="hs" cx="833" cy="1255" rx="44" ry="42" clip-path="url(#h4)"/><ellipse class="ho" cx="833" cy="1211" rx="44" ry="42"/></g>
            <g class="hole"><ellipse class="hd" cx="974" cy="1204" rx="44" ry="42"/><ellipse class="hs" cx="974" cy="1248" rx="44" ry="42" clip-path="url(#h5)"/><ellipse class="ho" cx="974" cy="1204" rx="44" ry="42"/></g>
            <g class="hole"><ellipse class="hd" cx="1116" cy="1198" rx="44" ry="42"/><ellipse class="hs" cx="1116" cy="1242" rx="44" ry="42" clip-path="url(#h6)"/><ellipse class="ho" cx="1116" cy="1198" rx="44" ry="42"/></g>
            <!-- datum csys -->
            <path class="ax" d="M966 1039l66-3 4 80-66 3M966 1054l117-6M966 1029l5 127"/>
            <path class="axh" d="M1083 1048l16-1-16-4zM968 1156l5 0-1 27z"/>
            <circle cx="966" cy="1029" r="3" class="axd"/>
            <text x="1104" y="1053" class="axt">Y</text>
            <text x="961" y="1021" class="axt">Z</text>
            <text x="967" y="1196" class="axx">X</text>
            <!-- leader -->
            <path class="lead" d="M1148 796l44-63"/>
            <path class="lead2" d="M1192 733l17-14h4"/>
            <circle cx="1148" cy="796" r="4" class="dot"/>
            <!-- triad -->
            <path class="tr-box" d="M445 1953l27-2 2 36-28 2z"/>
            <path class="tr-ln" d="M446 1981l28-2"/>
            <path class="tr-y" d="M444 1958l30-1"/>
            <path class="tr-yh" d="M474 1953l20 4-20 4z"/>
            <path class="tr-x" d="M442 1958l3 38"/>
            <path class="tr-xh" d="M441 1996h7l-3 13z"/>
            <path class="tr-z" d="M442 1958v-6"/>
            <path class="tr-zh" d="M438 1954l4-11 4 11z"/>
            <circle cx="442" cy="1959" r="3" class="tr-o"/>
            <text x="496" y="1962" class="tr-ty">Y</text>
            <text x="441" y="2020" class="tr-tx">X</text>
            <text x="438" y="1945" class="tr-tz">Z</text>
          </svg>

          <div class="tip">
            <i class="grip"></i>
            <div class="tip-tb">
              <div class="tr"><span class="t1">面积</span><span class="t2">490.2036</span><span class="t3">mm²</span><span class="t4"><i></i></span></div>
              <div class="tr alt"><span class="t1">周长</span><span class="t2">258.8835</span><span class="t3">mm</span><span class="t4"><i></i></span></div>
              <div class="tr"><span class="t1">重心</span><span class="t2">Point( -18.4700, -1.1475, 9.0000)</span><span class="t3">mm</span><span class="t4"><i></i></span></div>
            </div>
          </div>

          <div class="dlg">
            <div class="dlg-title"><svg class="dg"><use href="#s-wheel"/></svg><span>测量</span><svg class="rs" viewBox="0 0 16 16"><path d="M5 3a6 6 0 1 0 7 0" fill="none" stroke="#fff" stroke-width="1.800"/><path d="M4 0v5h5" fill="none" stroke="#fff" stroke-width="1.300"/></svg><svg class="dx" viewBox="0 0 14 14"><path d="M2 2l10 10M12 2L2 12" stroke="#fff" stroke-width="2"/></svg></div>
            <div class="sec s1">
              <div class="sec-h"><span>要测量的对象</span><svg><use href="#s-up"/></svg></div>
              <div class="gb radios">
                <label class="rd on"><i></i><span>对象</span></label><label class="rd"><i></i><span>点</span></label><label class="rd"><i></i><span>矢量</span></label>
                <label class="rd"><i></i><span>对象集</span></label><label class="rd"><i></i><span>点集</span></label><label class="rd"><i></i><span>坐标系</span></label>
              </div>
              <div class="selrow"><span class="sel-t">选择对象 (0)</span><span class="sel-i"><svg viewBox="0 0 20 20"><circle cx="10" cy="10" r="5.500" fill="none" stroke="#d21818" stroke-width="1.500"/><path d="M10 1v18M1 10h18" stroke="#7a1010" stroke-width="1.200"/></svg></span></div>
              <div class="gb list">
                <div class="g-h"><span>列表</span><svg><use href="#s-up"/></svg></div>
                <div class="list-b">
                  <div class="ltb">
                    <div class="lr"><span class="l1">对象 1</span><span class="l2">面 / 拉伸(2)</span></div>
                    <div class="lr sel"><span class="l1">选择对象</span><span class="l2"></span></div>
                    <div class="lr"><span class="l1"></span><span class="l2"></span></div>
                    <div class="lr"><span class="l1"></span><span class="l2"></span></div>
                    <div class="lr sh"><span class="l1"></span><span class="l2"></span></div>
                  </div>
                  <div class="sidebtns">
                    <span><svg viewBox="0 0 16 16"><path d="M2 2l12 12M14 2L2 14" stroke="#999" stroke-width="2.500"/></svg></span>
                    <span><svg viewBox="0 0 16 16"><path d="M2 2h12M8 4l5 6h-3v5H6v-5H3z" stroke="#aaa" fill="#aaa"/></svg></span>
                    <span><svg viewBox="0 0 16 16"><path d="M8 2l6 7h-3v5H5V9H2z" fill="#aaa"/></svg></span>
                    <span><svg viewBox="0 0 16 16"><path d="M8 14l6-7h-3V2H5v5H2z" fill="#aaa"/></svg></span>
                    <span><svg viewBox="0 0 16 16"><path d="M2 14h12M8 12l5-6h-3V1H6v5H3z" stroke="#aaa" fill="#aaa"/></svg></span>
                  </div>
                </div>
              </div>
              <div class="gb method">
                <div class="g-h"><span>测量方法</span></div>
                <div class="m-ic">
                  <span class="on"><svg viewBox="0 0 24 24"><path d="M3 22V6h18v16" fill="none" stroke="#111" stroke-width="1.400"/><path d="M3 1v5M21 1v5M3 3h18" stroke="#c01010" stroke-width="1.400" fill="none"/></svg></span>
                  <span><svg viewBox="0 0 24 24"><path d="M2 22V8h6v14M14 22V12h6v10" fill="none" stroke="#111" stroke-width="1.400"/><path d="M2 8V2h6v6M14 12V6h6" stroke="#c01010" stroke-width="1.400" fill="none"/></svg></span>
                  <span><svg viewBox="0 0 24 24"><path d="M2 22V12h6v5h9v5M2 12h20" fill="#fff" stroke="#111" stroke-width="1.400"/><path d="M3 2h18M3 2v10M12 2v10M21 2v10" stroke="#c01010" stroke-width="1.400" fill="none"/></svg></span>
                  <span><svg viewBox="0 0 24 24"><path d="M2 22v-5h9v-5h11v10z" fill="#fff" stroke="#111" stroke-width="1.400"/><path d="M2 2h20v10M2 2v8h9" stroke="#c01010" stroke-width="1.400" fill="none"/></svg></span>
                </div>
              </div>
            </div>
            <div class="sec s2">
              <div class="sec-h"><span>结果过滤器</span><svg><use href="#s-up"/></svg></div>
              <div class="res-t">显示 1 个测量，共 1 个</div>
              <div class="f-ic">
                <span><svg viewBox="0 0 24 24"><path d="M3 21L21 3" stroke="#1a2fa0" stroke-width="1.600"/><path d="M6 12l6 6M10 8l6 6M14 4l6 6" stroke="#c01010" stroke-width="1.400"/><circle cx="5" cy="19" r="2" fill="#1a2fa0"/></svg></span>
                <span><svg viewBox="0 0 24 24"><path d="M2 24C2 13 7 10 12 10s10 3 10 14" fill="none" stroke="#111" stroke-width="1.600"/><path d="M3 14c2-4 5-6 9-6s7 2 9 6" fill="none" stroke="#c01010" stroke-width="1.400"/><path d="M10 1l4 5M14 1l-4 5" stroke="#c01010"/></svg></span>
                <span><svg viewBox="0 0 24 24"><path d="M5 2v20L20 6" fill="none" stroke="#1a2fa0" stroke-width="1.800"/><path d="M5 8c3 0 6 1 7 4" fill="none" stroke="#c01010"/></svg></span>
                <span><svg viewBox="0 0 24 24"><path d="M12 2l9 4.500v11L12 22l-9-4.500v-11z" fill="#fff" stroke="#3f6ec0"/><path d="M12 11v11L3 17.500v-11z" fill="#b9cff0" stroke="#3f6ec0"/><path d="M12 11l9-4.500v11L12 22z" fill="#7aa9e8" stroke="#3f6ec0"/></svg></span>
                <span><svg viewBox="0 0 24 24"><path d="M12 2l9 4.500v11L12 22l-9-4.500v-11z" fill="#cfe4fb" stroke="#3f6ec0"/><path d="M12 11l9-4.500v11L12 22z" fill="#6fa8ee" stroke="#3f6ec0"/><path d="M12 11L3 6.500" stroke="#3f6ec0"/></svg></span>
                <span class="w"><svg viewBox="0 0 24 24"><path d="M3 2h14v4H3zM3 8h14v4H3zM3 14h14v4H3z" fill="#eee" stroke="#333"/><path d="M5 4h10M5 10h10M5 16h10" stroke="#3355cc"/><path d="M18 15v8M14 19h8" stroke="#1a6fe0" stroke-width="2.200"/></svg></span>
              </div>
            </div>
            <div class="more"><i class="caret"></i></div>
            <div class="btns"><button class="b">确定</button><button class="b pri">应用</button><button class="b">取消</button></div>
          </div>
        </div>
      </div>
    </div>

    <footer class="status">
      <span>选择要测量的对象。要取消选择，使用对象手柄的右键菜单中或列表中的“移除”。</span>
      <div class="mark">
        <svg class="mk1" viewBox="0 0 16 16"><rect width="16" height="16" fill="#bbb"/><path d="M3 12L12 3l2 2-9 9z" fill="#888"/></svg>
        <svg class="mk2" viewBox="0 0 16 14"><path d="M1 3V1h3M12 1h3v2" fill="none" stroke="#555"/><rect x="4" y="3" width="8" height="9" fill="#fff" stroke="#333" stroke-width="1.500"/><rect x="5" y="6" width="6" height="4" fill="#2a7fd8"/></svg>
        <span>UG爱好者论坛@NX小白白</span>
      </div>
    </footer>
  </div>
  <div class="teal"></div>
</div>
</body>
</html>
```

FILE: styles.css
```css
* { box-sizing: border-box; }
html, body { margin: 0; padding: 0; }
body {
  width: 2163px; height: 2074px; overflow: hidden;
  background: #f0f0f0; color: #2c2c2c;
  font-family: "Noto Sans", "Noto Sans CJK SC", sans-serif;
  font-size: 17px; line-height: 1.2;
}
i { display: block; font-style: normal; }
svg { display: block; flex: none; }
.defs { position: absolute; }
.window { width: 2163px; height: 2074px; display: flex; flex-direction: column; border-right: 7px solid #0a3fb0; }
.edge { height: 2px; display: flex; flex: none; }
.edge-a { width: 137px; background: #0a5cc6; }
.edge-b { width: 290px; background: #d8d8d8; }
.edge-c { flex: 1; background: #0a58c2; }
.inner { flex: 1; min-height: 0; display: flex; flex-direction: column; padding: 0 6px 0 3px; }
.teal { height: 6px; flex: none; background: #57a0bb; border-top: 1px solid #9fb9c4; }

.caret { width: 0; height: 0; border-left: 4px solid transparent; border-right: 4px solid transparent; border-top: 6px solid #222; flex: none; }
.caret.lt { border-top-color: #999; }
.caret.big-c { border-left-width: 6px; border-right-width: 6px; border-top-width: 8px; }

/* title bar */
.titlebar { height: 45px; flex: none; display: flex; align-items: center; }
.qa { width: 1177px; flex: none; display: flex; align-items: center; padding-left: 3px; }
.nx { width: 46px; font: bold 28px "Liberation Sans", sans-serif; color: #7e95a8; letter-spacing: -1px; flex: none; }
.qsep { width: 1px; height: 34px; background: #bbb; margin: 0 6px; flex: none; }
.nx + .qsep { margin-left: 0; }
.qi { width: 16px; height: 18px; }
.qi + .qi { margin-left: 7px; }
.qi.save { margin-left: 4px; }
.qa > .caret { margin: 0 8px; }
.qa > .caret + .qsep { margin-left: 0; }
.qa > .caret.c-win { margin: 0 0 0 6px; }
.qa > .caret.over { border-top-width: 5px; box-shadow: 0 -3px 0 -1px #222; margin: 0 0 0 8px; }
.qtext { font-size: 17px; white-space: nowrap; margin-left: 3px; padding-top: 2px; }
.qi.win { margin-left: 9px; }
.apptitle { font-size: 19px; color: #111; white-space: nowrap; width: 112px; padding-top: 3px; }
.winctl { flex: 1; display: flex; align-items: center; justify-content: flex-end; padding-right: 9px; }
.siemens { font: bold 17px "Liberation Sans", sans-serif; color: #009a9a; letter-spacing: .2px; margin: 4px 33px 0 0; }
.min { width: 9px; height: 3px; background: #444; margin-top: 12px; margin-right: 24px; }
.max { width: 14px; height: 16px; border: 2px solid #444; margin-right: 20px; }
.cls { width: 14px; height: 14px; }

/* menu */
.menubar { height: 36px; flex: none; display: flex; align-items: stretch; background: #bdbdbd; font-size: 21px; color: #222; }
.filetab { width: 107px; background: #57a0bb; color: #fff; display: flex; align-items: center; justify-content: center; font-size: 21px; }
.mi { padding: 0 13px; display: flex; align-items: center; white-space: nowrap; }
.filetab + .mi { margin-left: 2px; }
.mi.on { background: #f0f0f0; color: #1d84a8; margin: 2px 0 0; }
.menu-right { margin-left: auto; display: flex; align-items: center; padding-right: 3px; }
.search { width: 186px; height: 26px; background: #fff; border: 1px solid #cfcfcf; display: flex; align-items: center; justify-content: space-between; color: #bbb; font-size: 16.500px; padding: 0 6px 0 1px; margin-right: 6px; }
.search svg { width: 18px; height: 18px; }
.mr-ic { width: 24px; height: 24px; margin: 0 5px; }
.help { font: bold 18px "Liberation Sans", sans-serif; fill: #fff; text-anchor: middle; }

/* ribbon */
.ribbon { height: 116px; flex: none; display: flex; border-bottom: 1px solid #bbb; }
.rg { position: relative; display: flex; flex-direction: column; border-right: 1px solid #ccc; margin-top: 5px; }
.g1 { width: 103px; } .g2 { width: 388px; } .g3 { width: 56px; } .g4 { width: 45px; }
.rg-body { flex: 1; display: flex; align-items: flex-start; }
.g2 .rg-body { padding-left: 8px; }
.g3 .rg-body { padding-left: 2px; }
.rg-foot { height: 28px; flex: none; display: flex; align-items: center; margin-bottom: -3px; }
.g1 .rg-foot { padding-left: 22px; gap: 28px; }
.g2 .rg-foot { padding-left: 164px; position: relative; }
.g3 .rg-foot { padding-left: 1px; gap: 14px; }
.abs-r { position: absolute; left: 369px; top: 11px; }
.lbl { color: #1a7e9f; font-size: 17px; white-space: nowrap; }
.rb { display: flex; flex-direction: column; align-items: center; flex: none; font-size: 17px; white-space: nowrap; }
.rb .big { width: 32px; height: 32px; margin: 0 0 6px; }
.rb .caret { margin-top: 5px; }
.ibox { width: 38px; height: 35px; border: 1px solid #c4c4c4; border-radius: 3px; display: flex; align-items: center; justify-content: center; margin: -1px 0 5px; }
.ibox svg { width: 18px; height: 18px; }
.w-a { width: 60px; } .w-b { width: 38px; margin-left: -1px; }
.w-c { width: 76px; }
.w-d { width: 54px; }
.w-e { width: 45px; }
.rlist { display: flex; flex-direction: column; gap: 9px; margin-left: 6px; padding-top: 1px; }
.rlist div { display: flex; align-items: center; gap: 4px; height: 20px; white-space: nowrap; }
.rlist svg { width: 17px; height: 17px; }
.rg-end { flex: 1; display: flex; align-items: flex-end; justify-content: flex-end; padding: 0 7px 9px 0; }

/* selection bar */
.selbar { height: 48px; flex: none; display: flex; align-items: center; border-bottom: 1px solid #999; font-size: 17px; }
.menu-btn { display: flex; align-items: center; gap: 3px; padding-left: 9px; width: 111px; white-space: nowrap; }
.menu-btn span, .combo span { padding-top: 2px; }
.menu-btn svg { width: 17px; height: 17px; }
.vsep { width: 1px; height: 40px; background: #c8c8c8; flex: none; }
.combo { height: 26px; margin-left: 9px; background: #fff; border: 1px solid #aaa; display: flex; align-items: center; justify-content: space-between; padding: 0 6px 0 2px; flex: none; font-size: 17px; }
.c201 { width: 201px; margin-left: 12px; }
.c212 { width: 212px; }
.g11 { margin-left: 11px; }
.tools { display: flex; align-items: center; }
.tools svg { width: 18px; height: 18px; flex: none; }
.tools .caret { margin-left: 3px; margin-right: 3px; border-left-width: 3.500px; border-right-width: 3.500px; border-top-width: 5px; }
.t-a { width: 263px; flex: none; padding-left: 8px; }
.t-a > svg { margin: 0 3.300px; }
.c212.first { margin-left: 0; }
.t-b { padding-left: 10px; flex: 1; }
.t-b > svg { margin: 0 3.250px; }
.t-b > .stack { margin: 0 3px 0 9px; }
.stack { display: flex; flex-direction: column; gap: 6px; }
.t-b > .stack.sb { gap: 7px; margin-left: 8px; }
.stk { display: flex; align-items: center; gap: 9px; }
.tools .stk .caret { margin: 0; }
.vsep.tall { margin: 0 9px 0 6px; }
.tools .caret.end { margin-left: 12px; margin-top: 15px; }

/* main */
.main { flex: 1; min-height: 0; display: flex; }
.strip { width: 32px; flex: none; background: #bdbdbd; display: flex; flex-direction: column; align-items: stretch; color: #444; }
.st-gear { width: 18px; height: 18px; margin: 4px 0 20px 6px; }
.st { height: 42px; padding-left: 2px; display: flex; align-items: center; justify-content: center; margin-left: 2px; }
.st svg { width: 24px; height: 24px; }
.st.active { background: #f0f0f0; border: 1px solid #ddd; border-right: 0; height: 44px; margin-top: -1px; margin-bottom: -1px; }
.m11 { margin-top: 12px; } .m12 { margin-top: 12px; } .m-1 { margin-top: -1px; } .m1 { margin-top: 1px; }

.nav { width: 331px; flex: none; display: flex; flex-direction: column; padding: 0 10px 6px 6px; border-right: 1px solid #999; background: #f0f0f0; }
.nav-head { height: 35px; flex: none; display: flex; align-items: center; justify-content: space-between; font-size: 18px; padding: 0 8px 0 4px; }
.nav-head span { padding-top: 4px; }
.nav-max { width: 16px; height: 14px; border: 1px solid #222; border-top-width: 3px; margin-top: 2px; }
.tbl { flex: 1; min-height: 0; display: flex; flex-direction: column; border: 1px solid #bbb; border-bottom: 0; padding: 1px 2px 0 1px; background: #fff; }
.thead { height: 28px; flex: none; display: flex; background: #f3f3f3; font-size: 18px; border-bottom: 1px solid #e0e0e0; align-items: stretch; }
.thead span span { padding-top: 2px; }
.c-a { width: 200px; flex: none; border-right: 1px solid #e0e0e0; display: flex; align-items: center; white-space: nowrap; position: relative; }
.c-b { width: 100px; flex: none; border-right: 1px solid #e0e0e0; display: flex; align-items: center; padding-left: 6px; }
.c-c { flex: 1; overflow: hidden; min-width: 0; display: flex; align-items: center; }
.thead .c-a { padding-left: 6px; }
.sort { margin-left: 19px; width: 0; height: 0; border-left: 7px solid transparent; border-right: 7px solid transparent; border-bottom: 6px solid #222; }
.tree { flex: 1; min-height: 0; display: flex; flex-direction: column; }
.r { height: 28px; flex: none; display: flex; font-size: 18px; color: #333; border-bottom: 1px solid #ebebeb; background: #fbfbfb; }
.r .c-a > span { padding-top: 2px; }
.r:nth-child(even) { background: #f5f5f5; }
.exp { width: 12px; height: 12px; border: 1px solid #ccc; background: #fff; margin-left: 4px; flex: none; position: relative; z-index: 1; }
.exp::before { content: ""; position: absolute; left: 1px; right: 1px; top: 4px; height: 1.500px; background: #333; }
.exp.plus::after { content: ""; position: absolute; top: 1px; bottom: 1px; left: 4px; width: 1.500px; background: #333; }
.top .c-a::before { content: ""; position: absolute; left: 9px; top: 0; bottom: 0; border-left: 1px dotted #999; }
.top.last .c-a::before { bottom: 14px; }
.top .c-a > span { margin-left: 2px; }
.ti { width: 18px; height: 16px; margin-left: 3px; }
.ti.tk { width: 13px; height: 13px; margin-left: 5px; }
.top .c-a > span.sp { margin-left: 3px; }
.ft .c-a { padding-left: 40px; }
.ft .c-a::before { content: ""; position: absolute; left: 29px; top: -1px; bottom: 0; border-left: 1px dotted #999; }
.ft .c-a::after { content: ""; position: absolute; left: 30px; top: 13px; width: 9px; border-top: 1px dotted #999; }
.ft.cur .c-a::before { bottom: 13px; }
.cb { width: 14px; height: 14px; }
.fi { width: 16px; height: 16px; margin: 0 2px 0 1px; }
.dim .c-a > span { color: #b0b0b0; }
.cur .c-a > span { font-weight: 700; color: #222; }
.ok { width: 13px; height: 13px; }
.empty { flex: 1; min-height: 0; background:
  linear-gradient(#e6e6e6, #e6e6e6) 199px 0 / 1px 100% no-repeat,
  linear-gradient(#e6e6e6, #e6e6e6) 299px 0 / 1px 100% no-repeat,
  repeating-linear-gradient(#fbfbfb 0, #fbfbfb 27px, #ededed 27px, #ededed 28px, #f6f6f6 28px, #f6f6f6 55px, #ededed 55px, #ededed 56px); }
.hscroll { height: 24px; flex: none; background: #f0f0f0; display: flex; align-items: center; position: relative; }
.thumb { position: absolute; left: 27px; width: 201px; top: 0; bottom: 0; background: #c9c9c9; }
.chev { position: absolute; width: 10px; height: 10px; border-left: 3px solid #555; border-bottom: 3px solid #555; transform: rotate(45deg); }
.chev.l { left: 10px; }
.chev.r { right: 13px; transform: rotate(225deg); }
.nav-div { height: 6px; flex: none; background: #b4b4b4; margin-top: 1px; }
.acc { height: 32px; flex: none; display: flex; align-items: center; justify-content: space-between; border-bottom: 3px solid #d2d2d2; padding: 0 4px 0 7px; color: #197a9b; font-size: 22px; }
.acc svg { width: 20px; height: 20px; margin-bottom: 5px; }
.acc span { padding-top: 3px; }

/* work area */
.work { flex: 1; min-width: 0; display: flex; flex-direction: column; }
.tabstrip { height: 30px; flex: none; border-bottom: 2px solid #57a0bb; }
.doctab { width: 174px; height: 28px; background: #57a0bb; color: #fff; display: flex; align-items: center; padding-left: 5px; font-size: 19px; white-space: nowrap; }
.doctab span { padding-top: 2px; }
.doctab > svg:first-child { width: 18px; height: 18px; margin-right: 3px; }
.doc { width: 10px; height: 11px; margin-left: 6px; }
.x { width: 10px; height: 10px; margin-left: 6px; }
.viewport { flex: 1; min-height: 0; position: relative; overflow: hidden; margin-right: -2px; border-right: 1px solid #bbb; border-bottom: 2px solid #bbb; background: linear-gradient(#b3b4b6 0%, #d3d4d6 45%, #e4e5e7 75%, #e8e9eb 100%); }
.model { position: absolute; left: 0; top: 0; width: 1786px; height: 1761px; }
.model path { stroke: #3c4247; stroke-width: 1.100; stroke-linejoin: round; }
.pl { fill: #6ce4ff; } .lt1 { fill: #6fdcff; } .lt2 { fill: #6fdcff; }
.md1 { fill: #4a96d8; } .md2 { fill: #5cb8fc; } .dk { fill: #376a9a; }
.nv { fill: #24466a; } .nv2 { fill: #2c5a82; }
.gr { fill: #8bdd7a; }
.model .gr { stroke: #6fb86a; }
.eb { fill: #4a96d8; }
.model .band { fill: #6fdcff; stroke: none; }
.model .ln { fill: none; }
.model .edge-dk { fill: none; stroke: #2b3a44; stroke-width: 2; }
.hd { fill: url(#hg); } .hs { fill: url(#bg); stroke: #3c4247; }
.ho { fill: none; stroke: #3c4247; stroke-width: 1.200; }
.up .ho, .up .hs { stroke: #5f9a62; }
.model .ax { fill: none; stroke: #d8d8d8; stroke-width: 1.100; }
.model .axh { fill: #eee; stroke: #bbb; stroke-width: .6; }
.axd { fill: #777; }
.axt { font: 14px "Liberation Sans", sans-serif; fill: #b9c2c9; }
.axx { font: 14px "Liberation Sans", sans-serif; fill: #1414d8; }
.model .lead { stroke: #a66a3c; stroke-width: 2; fill: none; }
.model .lead2 { stroke: #e4e6e8; stroke-width: 1.500; fill: none; }
.dot { fill: #4fa85a; }
.model .tr-box { fill: #c7c8cb; stroke: #b0b1b4; }
.model .tr-ln { stroke: #aaa; fill: none; }
.model .tr-y { stroke: #3fa04a; stroke-width: 2.500; opacity: .5; }
.model .tr-yh { fill: #1f9a2f; stroke: #1f9a2f; }
.model .tr-x { stroke: #d84a4a; stroke-width: 3; }
.model .tr-xh { fill: #d83a3a; stroke: #d83a3a; }
.model .tr-z { stroke: #1430c8; stroke-width: 3; }
.model .tr-zh { fill: #1430c8; stroke: #1430c8; }
.tr-o { fill: #aaa; }
.tr-ty { font: 12px "Liberation Sans", sans-serif; fill: #3aa85a; }
.tr-tx { font: 12px "Liberation Sans", sans-serif; fill: #d86a6a; }
.tr-tz { font: 11px "Liberation Sans", sans-serif; fill: #1430c8; }

/* tooltip */
.tip { position: absolute; left: 844px; top: 440px; width: 420px; height: 94px; background: #f0f0f0; border: 2px solid #c8c8c8; display: flex; padding: 3px 0 3px 3px; }
.grip { width: 6px; margin-right: 10px; background: repeating-linear-gradient(#aaa 0 2px, transparent 2px 4px) 0 0 / 2px 100% no-repeat, repeating-linear-gradient(#aaa 0 2px, transparent 2px 4px) 4px 0 / 2px 100% no-repeat; }
.tip-tb { flex: 1; border: 1px solid #ccc; border-right: 0; background: #fff; }
.tr { height: 28px; display: flex; align-items: center; font-size: 18px; background: #fbfbfb; border-bottom: 1px solid #e6e6e6; }
.tr.alt { background: #f5f5f5; }
.tr span { display: flex; align-items: center; height: 100%; white-space: nowrap; border-right: 1px solid #e6e6e6; padding: 2px 0 0 4px; }
.t1 { width: 44px; } .tr .t2 { width: 292px; letter-spacing: .2px; } .tr .t3 { width: 49px; padding-left: 2px; }
.t4 { flex: 1; }
.t4 i { width: 7px; height: 16px; background: #fff; border: 2px solid #2a3f9a; margin-left: 2px; }

/* dialog */
.dlg { position: absolute; left: 1258px; top: 60px; width: 428px; height: 615px; background: #dcdcdc; border: 1px solid #a5a5a5; display: flex; flex-direction: column; }
.dlg-title { height: 32px; flex: none; background: #57a0bb; color: #fff; display: flex; align-items: center; padding: 0 8px 0 9px; font-size: 22px; }
.dg { width: 17px; height: 17px; margin-right: 10px; }
.rs { width: 14px; height: 14px; margin-left: auto; margin-right: 16px; }
.dx { width: 13px; height: 13px; }
.sec { background: #f0f0f0; margin: 4px 4px 0 5px; padding: 0 8px; flex: none; }
.s1 { height: 399px; border-bottom: 2px solid #aaa; }
.s2 { height: 109px; margin-top: 2px; border-bottom: 2px solid #b5b5b5; }
.sec-h { height: 38px; display: flex; align-items: center; justify-content: space-between; color: #127b9e; font-size: 22px; padding: 0 0 6px 0; margin: 0 -3px 0 -1px; }
.sec-h svg { width: 20px; height: 20px; }
.gb { background: #dcdcdc; border: 1px solid #c4c4c4; width: 399px; margin-left: 1px; }
.radios { height: 68px; display: grid; grid-template-columns: 85px 86px 1fr; grid-auto-rows: 30px; align-content: center; padding-left: 5px; padding-top: 2px; font-size: 18px; }
.rd { display: flex; align-items: center; gap: 3px; white-space: nowrap; color: #222; }
.rd span { padding-top: 2px; }
.rd i { width: 22px; height: 22px; border-radius: 50%; background: #fff; border: 1px solid #444; flex: none; position: relative; box-shadow: inset 1px 1px 1px #ccc; }
.rd.on i::after { content: ""; position: absolute; left: 5px; top: 5px; width: 10px; height: 10px; border-radius: 50%; background: #333; }
.selrow { height: 31px; margin: 3px 0 4px 1px; width: 399px; display: flex; justify-content: space-between; font-size: 18px; }
.sel-t { width: 365px; background: #ffdd72; display: flex; align-items: center; color: #222; padding-top: 2px; }
.sel-i { width: 32px; background: #ffdd72; display: flex; align-items: center; justify-content: center; }
.sel-i svg { width: 20px; height: 20px; }
.list { height: 174px; padding: 0 9px 0 8px; margin-bottom: 3px; }
.g-h { height: 35px; display: flex; align-items: center; justify-content: space-between; color: #197a9b; font-size: 18px; margin-right: -3px; }
.g-h svg { width: 17px; height: 17px; }
.list .g-h { padding-bottom: 8px; }
.list-b { display: flex; gap: 2px; }
.ltb { width: 355px; height: 129px; background: #fff; border: 1px solid #bbb; position: relative; overflow: hidden; padding-top: 1px; }
.ltb::before { content: ""; position: absolute; left: 10px; top: 14px; height: 28px; width: 8px; border-left: 1px dotted #999; border-bottom: 1px dotted #999; z-index: 1; }
.lr { height: 28px; display: flex; font-size: 18px; border-bottom: 1px solid #e6e6e6; background: #fbfbfb; }
.lr.sel { height: 29px; }
.lr.sel .l1, .lr.sel .l2 { background: #88c0d2; color: #222; }
.l1 { width: 151px; padding: 2px 0 0 22px; border-right: 1px solid #e6e6e6; display: flex; align-items: center; white-space: nowrap; }
.l2 { width: 200px; padding: 2px 0 0 4px; display: flex; align-items: center; white-space: nowrap; }
.lr.sel .l1 { margin-left: 20px; width: 131px; padding-left: 2px; }
.sidebtns { display: flex; flex-direction: column; gap: 3px; margin-left: -1px; }
.sidebtns span { width: 23px; height: 23px; background: #dfdfdf; border: 1px solid #c4c4c4; display: flex; align-items: center; justify-content: center; }
.sidebtns svg { width: 16px; height: 16px; }
.method { height: 68px; padding-left: 4px; }
.method .g-h { height: 30px; padding-left: 4px; }
.m-ic { display: flex; gap: 2px; }
.m-ic span { width: 32px; height: 32px; display: flex; align-items: center; justify-content: center; }
.m-ic .on { background: #86bccf; }
.m-ic svg { width: 25px; height: 25px; }
.res-t { height: 27px; display: flex; align-items: flex-start; font-size: 18px; margin-top: 2px; padding-top: 2px; color: #222; }
.f-ic { display: flex; gap: 1px; margin-left: 1px; }
.f-ic span { width: 33px; height: 32px; background: #ffdd72; display: flex; align-items: center; justify-content: center; }
.f-ic span.w { background: #fafafa; border: 1px solid #bbb; }
.f-ic svg { width: 24px; height: 24px; }
.more { height: 17px; display: flex; justify-content: center; align-items: center; border-bottom: 1px solid #e2e2e2; margin: 2px 4px 0 5px; flex: none; }
.more .caret { border-left-width: 5.500px; border-right-width: 5.500px; border-top-width: 6px; }
.btns { display: flex; justify-content: flex-end; gap: 5px; padding: 7px 14px 0 0; }
.b { width: 66px; height: 31px; background: #e4e4e4; border: 1px solid #aaa; font: 18px "Noto Sans CJK SC", sans-serif; color: #222; padding: 0; }
.b.pri { background: #6fb3cb; border-color: #6fb3cb; color: #fff; }

/* status */
.status { height: 28px; flex: none; display: flex; align-items: center; font-size: 17px; font-weight: 700; color: #222; padding-left: 3px; position: relative; letter-spacing: -.1px; }
.mark { position: absolute; right: -6px; top: 6px; display: flex; flex-direction: column; align-items: flex-end; font-weight: 400; }
.mark span { font: 15.500px "Liberation Mono", "Noto Sans CJK SC", monospace; color: #666; line-height: 16px; margin-top: -7px; white-space: nowrap; }
.mk1 { width: 16px; height: 16px; position: relative; right: 72px; }
.mk2 { width: 16px; height: 14px; position: absolute; right: 64px; top: 0; }
```
